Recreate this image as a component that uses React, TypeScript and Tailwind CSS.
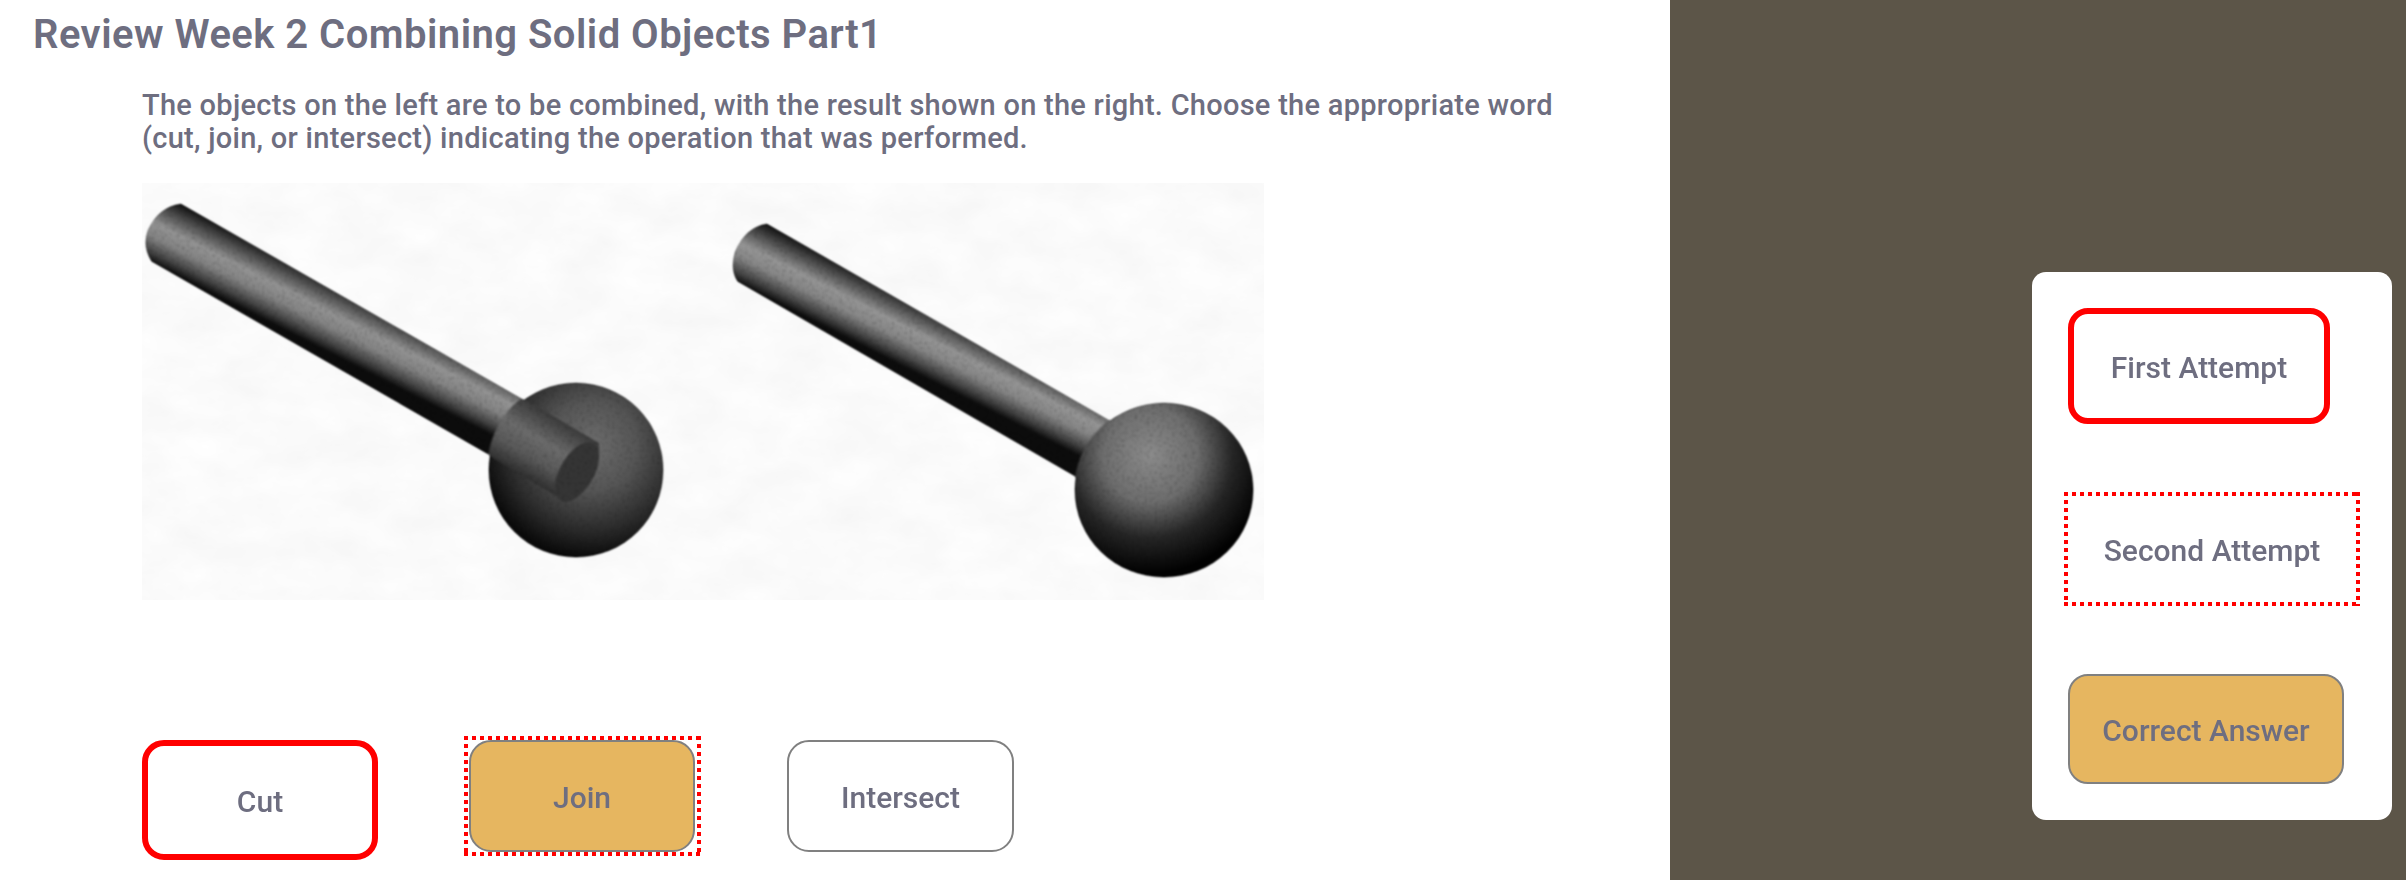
const btnText = "pt-[3px] text-[30px] font-medium text-[#6e6e80]";

// square 4px dots, the browser's own dotted border comes out round
const dots =
  "p-[4px] bg-[linear-gradient(to_right,#ff0000_50%,transparent_50%),linear-gradient(to_right,#ff0000_50%,transparent_50%),linear-gradient(to_bottom,#ff0000_50%,transparent_50%),linear-gradient(to_bottom,#ff0000_50%,transparent_50%)] bg-[length:8px_4px,8px_4px,4px_8px,4px_8px] bg-[position:0_0,0_100%,0_0,100%_0] [background-repeat:repeat-x,repeat-x,repeat-y,repeat-y]";

const Objects = () => {
  return (
    <svg width="1122" height="417" viewBox="142 183 1122 417" className="block">
      <defs>
        <filter id="paper" x="0" y="0" width="100%" height="100%" colorInterpolationFilters="sRGB">
          <feTurbulence type="fractalNoise" baseFrequency="0.018 0.03" numOctaves="4" seed="7" />
          <feColorMatrix
            type="matrix"
            values="0.04 0 0 0 0.962  0.04 0 0 0 0.962  0.04 0 0 0 0.962  0 0 0 0 1"
          />
        </filter>
        <filter id="grain" x="-5%" y="-5%" width="110%" height="110%" colorInterpolationFilters="sRGB">
          <feGaussianBlur in="SourceGraphic" stdDeviation="1.1" result="soft" />
          <feTurbulence type="fractalNoise" baseFrequency="0.4" numOctaves="2" seed="3" />
          <feColorMatrix
            type="matrix"
            values="0.7 0 0 0 0.65  0.7 0 0 0 0.65  0.7 0 0 0 0.65  0 0 0 0 1"
            result="noise"
          />
          <feGaussianBlur in="noise" stdDeviation="0.8" result="softNoise" />
          <feComposite in="soft" in2="softNoise" operator="arithmetic" k1="1" />
          <feComposite in2="soft" operator="in" />
        </filter>
        <linearGradient id="rodLeft" gradientUnits="userSpaceOnUse" x1="181" y1="203" x2="151" y2="262">
          <stop offset="0" stopColor="#0c0c0c" />
          <stop offset="0.2" stopColor="#4a4a4a" />
          <stop offset="0.45" stopColor="#949494" />
          <stop offset="0.65" stopColor="#848484" />
          <stop offset="0.86" stopColor="#444444" />
          <stop offset="1" stopColor="#0c0c0c" />
        </linearGradient>
        <linearGradient id="rodRight" gradientUnits="userSpaceOnUse" x1="767" y1="223" x2="737" y2="282">
          <stop offset="0" stopColor="#0c0c0c" />
          <stop offset="0.2" stopColor="#4a4a4a" />
          <stop offset="0.45" stopColor="#969696" />
          <stop offset="0.65" stopColor="#868686" />
          <stop offset="0.86" stopColor="#444444" />
          <stop offset="1" stopColor="#0c0c0c" />
        </linearGradient>
        <linearGradient id="stubLeft" gradientUnits="userSpaceOnUse" x1="522" y1="398" x2="488" y2="455">
          <stop offset="0" stopColor="#3c3c3c" />
          <stop offset="0.4" stopColor="#6c6c6c" />
          <stop offset="0.7" stopColor="#5a5a5a" />
          <stop offset="1" stopColor="#303030" />
        </linearGradient>
        <radialGradient id="ballLeft" gradientUnits="userSpaceOnUse" cx="592" cy="446" r="112">
          <stop offset="0" stopColor="#6e6e6e" />
          <stop offset="0.4" stopColor="#565656" />
          <stop offset="0.75" stopColor="#2c2c2c" />
          <stop offset="1" stopColor="#0a0a0a" />
        </radialGradient>
        <radialGradient id="ballRight" gradientUnits="userSpaceOnUse" cx="1150" cy="455" r="118">
          <stop offset="0" stopColor="#8c8c8c" />
          <stop offset="0.4" stopColor="#6e6e6e" />
          <stop offset="0.7" stopColor="#262626" />
          <stop offset="1" stopColor="#020202" />
        </radialGradient>
      </defs>
      <rect x="142" y="183" width="1122" height="417" fill="#fafafa" filter="url(#paper)" />
      <g filter="url(#grain)">
        <circle cx="576" cy="470" r="88" fill="url(#ballLeft)" />
        <path
          d="M181 203 L522 398 L488 455 L151 262 Q141 246 147 230 Q158 206 181 203 Z"
          fill="url(#rodLeft)"
        />
        <path
          d="M522 398 L599 443 Q601 470 585 490 Q572 504 558 497 L488 455 Q495 418 522 398 Z"
          fill="url(#stubLeft)"
        />
        <ellipse cx="577" cy="472" rx="17" ry="33" transform="rotate(30 577 472)" fill="#353535" />
        <path
          d="M767 223 L1112 421 L1080 480 L737 282 Q729 270 734 252 Q745 226 767 223 Z"
          fill="url(#rodRight)"
        />
        <ellipse cx="1164" cy="490" rx="90" ry="88" fill="url(#ballRight)" />
      </g>
    </svg>
  );
};

const App = () => {
  return (
    <div className="flex w-[2406px] h-[880px] overflow-hidden font-['Roboto',sans-serif] text-[#6e6e80]">
      <div className="w-[1670px] h-full bg-white">
        <h1 className="pl-[33px] pt-[11px] text-[40px] leading-[48px] font-semibold tracking-[0.47px]">
          Review Week 2 Combining Solid Objects Part1
        </h1>
        <div className="pl-[142px]">
          <p className="mt-[30px] w-[1480px] text-[29px] leading-[33px] font-medium tracking-[0.27px]">
            The objects on the left are to be combined, with the result shown on the right. Choose the appropriate word
            <br />
            (cut, join, or intersect) indicating the operation that was performed.
          </p>
          <div className="mt-[28px]">
            <Objects />
          </div>
          <div className="mt-[136px] flex items-start gap-[86px]">
            <div className={`mt-[4px] flex h-[120px] w-[236px] items-center justify-center rounded-[22px] border-[6px] border-[#ff0000] ${btnText}`}>
              Cut
            </div>
            <div className={`h-[120px] w-[237px] pl-[5px] ${dots}`}>
              <div className={`flex h-[112px] w-[226px] items-center justify-center rounded-[22px] border-2 border-[#808080] bg-[#e6b660] ${btnText}`}>
                Join
              </div>
            </div>
            <div className={`mt-[4px] flex h-[112px] w-[227px] items-center justify-center rounded-[22px] border-2 border-[#808080] ${btnText}`}>
              Intersect
            </div>
          </div>
        </div>
      </div>
      <div className="flex-1 bg-[#5c5548] pt-[272px] pl-[362px]">
        <div className="h-[548px] w-[360px] rounded-[14px] bg-white pt-[36px] pl-[32px]">
          <div className={`ml-[4px] flex h-[116px] w-[262px] items-center justify-center rounded-[20px] border-[6px] border-[#ff0000] ${btnText}`}>
            First Attempt
          </div>
          <div className={`mt-[68px] h-[114px] w-[296px] ${dots}`}>
            <div className={`flex h-full items-center justify-center ${btnText}`}>Second Attempt</div>
          </div>
          <div className={`ml-[4px] mt-[68px] flex h-[110px] w-[276px] items-center justify-center rounded-[20px] border-2 border-[#808080] bg-[#e6b660] ${btnText}`}>
            Correct Answer
          </div>
        </div>
      </div>
    </div>
  );
};

export default App;
